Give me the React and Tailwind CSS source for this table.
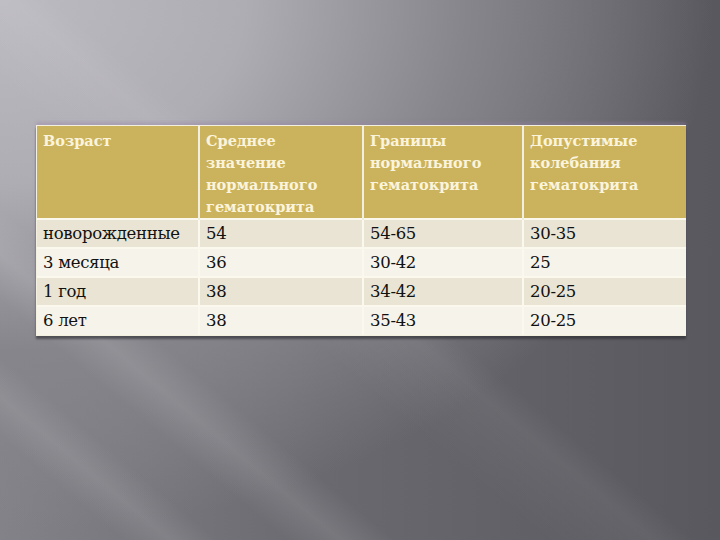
import React from "react";

const header = [
  "Возраст",
  "Среднее значение нормального гематокрита",
  "Границы нормального гематокрита",
  "Допустимые колебания гематокрита",
];

const rows = [
  ["новорожденные", "54", "54-65", "30-35"],
  ["3 месяца", "36", "30-42", "25"],
  ["1 год", "38", "34-42", "20-25"],
  ["6 лет", "38", "35-43", "20-25"],
];

const widths = ["w-[162px]", "w-[164px]", "w-[160px]", "w-[163px]"];

const App = () => {
  return (
    <div className="relative w-[720px] h-[540px] overflow-hidden bg-[radial-gradient(ellipse_at_0%_0%,#bdbbc2_0%,#afadb4_24%,#86858b_46%,rgba(110,109,115,0)_70%),linear-gradient(90deg,#838288_0%,#6a696f_45%,#59585e_100%)]">
      {/* diagonal light streaks */}
      <div className="absolute inset-0 bg-[linear-gradient(40deg,transparent_9%,rgba(255,255,255,0.09)_12.5%,transparent_16%,transparent_21%,rgba(255,255,255,0.1)_25%,transparent_29%,transparent_40%,rgba(255,255,255,0.05)_48%,transparent_51%)]"></div>

      <div className="relative pt-[125px] pl-[36px]">
        <div className="w-[650px] shadow-[0_3px_2px_rgba(40,40,48,0.6),0_-3px_3px_rgba(150,130,170,0.35)] border border-[#f4f0e0]">
          <table className="w-full border-collapse table-fixed font-['DejaVu_Serif','Liberation_Serif',serif]">
            <thead>
              <tr className="bg-[#cbb35d]">
                {header.map((h, i) => (
                  <th
                    key={i}
                    className={`${widths[i]} h-[92px] align-top text-left font-bold px-[6px] pt-[4px] text-[14.5px] leading-[22px] text-[#fbf4dc] border-l-2 border-[#f3efe0] first:border-l-0`}
                  >
                    {h}
                  </th>
                ))}
              </tr>
            </thead>
            <tbody>
              {rows.map((r, ri) => (
                <tr
                  key={ri}
                  className={`${ri % 2 === 0 ? "bg-[#e9e4d3]" : "bg-[#f6f3eb]"} border-t-2 border-[#fbf8ee]`}
                >
                  {r.map((c, ci) => (
                    <td
                      key={ci}
                      className="h-[29px] px-[6px] text-[16.5px] leading-[20px] text-[#111] tracking-[-0.3px] border-l-2 border-[#fbf8ee] first:border-l-0"
                    >
                      {c}
                    </td>
                  ))}
                </tr>
              ))}
            </tbody>
          </table>
        </div>
      </div>
    </div>
  );
};

export default App;
